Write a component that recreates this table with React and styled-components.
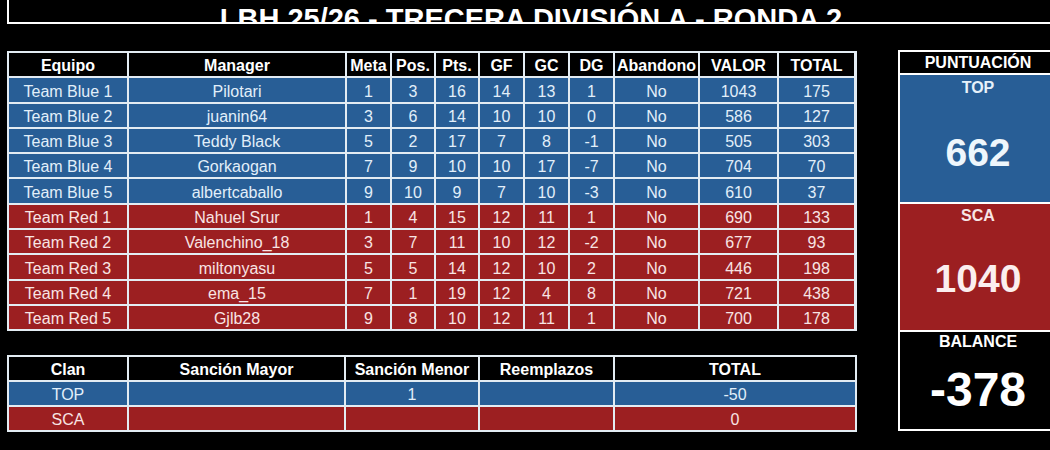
import React from "react";
import styled, { createGlobalStyle } from "styled-components";

const GlobalStyle = createGlobalStyle`
  html, body {
    margin: 0;
    padding: 0;
    background: #000;
    overflow: hidden;
  }
  body {
    font-family: "Liberation Sans", Arial, sans-serif;
    color: #fff;
  }
`;

const Page = styled.div`
  padding-left: 7px;
  width: 1100px;
`;

const TitleBar = styled.div`
  box-sizing: border-box;
  width: 1046px;
  height: 24px;
  padding-top: 5px;
  border-left: 2px solid #fff;
  border-bottom: 2px solid #fff;
  overflow: hidden;
  text-align: center;
`;

const Title = styled.h1`
  margin: 0;
  font-size: 29px;
  line-height: 29px;
  font-weight: 700;
  color: #fff;
  white-space: nowrap;
`;

const Body = styled.div`
  display: flex;
  align-items: flex-start;
  gap: 41px;
  margin-top: 26px;
`;

const LeftCol = styled.div`
  display: flex;
  flex-direction: column;
  gap: 24px;
  padding-top: 1px;
`;

const Grid = styled.div`
  display: grid;
  grid-template-columns: ${(p) => p.$cols};
  grid-auto-rows: ${(p) => p.$rowH};
  gap: 2px;
  padding: 2px;
  background: #e3ecf3;
`;

const tones = {
  head: { bg: "#000", fg: "#fff" },
  blue: { bg: "#285e96", fg: "#e2effa" },
  red: { bg: "#9c1f21", fg: "#f8e4e4" },
};

const Cell = styled.div`
  display: flex;
  align-items: flex-end;
  justify-content: center;
  background: ${(p) => tones[p.$tone].bg};
  color: ${(p) => tones[p.$tone].fg};
  font-size: 16px;
  line-height: 18px;
  padding-bottom: 1px;
  font-weight: ${(p) => (p.$tone === "head" ? 700 : 400)};
  white-space: nowrap;
  overflow: hidden;
`;

const ScorePanel = styled.div`
  display: grid;
  grid-template-rows: 21px 127px 126px 97px;
  gap: 2px;
  padding: 2px;
  width: 156px;
  background: #fff;
`;

const PanelSection = styled.div`
  display: flex;
  flex-direction: column;
  align-items: center;
  background: ${(p) => tones[p.$tone].bg};
  color: #fff;
`;

const PanelLabel = styled.div`
  font-size: 16px;
  font-weight: 700;
  line-height: 18px;
  padding-top: ${(p) => p.$top || 0}px;
  color: ${(p) => (p.$tone === "red" ? "#f7e6e6" : p.$tone === "blue" ? "#e6f1fa" : "#fff")};
`;

const BigNumber = styled.div`
  flex: 1;
  display: flex;
  align-items: center;
  padding-top: ${(p) => p.$top || 0}px;
  font-size: ${(p) => p.$size}px;
  font-weight: 700;
  line-height: 1;
  color: ${(p) => (p.$tone === "red" ? "#fbeeee" : p.$tone === "blue" ? "#eef6fc" : "#fff")};
`;

const mainCols = "118px 216px 43px 42px 42px 43px 43px 43px 83px 77px 75px";
const mainHead = ["Equipo", "Manager", "Meta", "Pos.", "Pts.", "GF", "GC", "DG", "Abandono", "VALOR", "TOTAL"];

const teams = [
  ["Team Blue 1", "Pilotari", 1, 3, 16, 14, 13, 1, "No", 1043, 175],
  ["Team Blue 2", "juanin64", 3, 6, 14, 10, 10, 0, "No", 586, 127],
  ["Team Blue 3", "Teddy Black", 5, 2, 17, 7, 8, -1, "No", 505, 303],
  ["Team Blue 4", "Gorkaogan", 7, 9, 10, 10, 17, -7, "No", 704, 70],
  ["Team Blue 5", "albertcaballo", 9, 10, 9, 7, 10, -3, "No", 610, 37],
  ["Team Red 1", "Nahuel Srur", 1, 4, 15, 12, 11, 1, "No", 690, 133],
  ["Team Red 2", "Valenchino_18", 3, 7, 11, 10, 12, -2, "No", 677, 93],
  ["Team Red 3", "miltonyasu", 5, 5, 14, 12, 10, 2, "No", 446, 198],
  ["Team Red 4", "ema_15", 7, 1, 19, 12, 4, 8, "No", 721, 438],
  ["Team Red 5", "Gjlb28", 9, 8, 10, 12, 11, 1, "No", 700, 178],
];

const clanCols = "118px 215px 132px 133px 240px";
const clanHead = ["Clan", "Sanción Mayor", "Sanción Menor", "Reemplazos", "TOTAL"];
const clans = [
  ["TOP", "", 1, "", -50],
  ["SCA", "", "", "", 0],
];

export default function App() {
  return (
    <Page>
      <GlobalStyle />
      <TitleBar>
        <Title>LBH 25/26 - TRECERA DIVISIÓN A - RONDA 2</Title>
      </TitleBar>
      <Body>
        <LeftCol>
          <Grid $cols={mainCols} $rowH="23.3px">
            {mainHead.map((h) => (
              <Cell key={h} $tone="head">{h}</Cell>
            ))}
            {teams.map((row, i) =>
              row.map((v, j) => (
                <Cell key={`${i}-${j}`} $tone={i < 5 ? "blue" : "red"}>
                  {v}
                </Cell>
              ))
            )}
          </Grid>
          <Grid $cols={clanCols} $rowH="23px">
            {clanHead.map((h) => (
              <Cell key={h} $tone="head">{h}</Cell>
            ))}
            {clans.map((row, i) =>
              row.map((v, j) => (
                <Cell key={`c${i}-${j}`} $tone={i === 0 ? "blue" : "red"}>
                  {v}
                </Cell>
              ))
            )}
          </Grid>
        </LeftCol>
        <ScorePanel>
          <PanelSection $tone="head">
            <PanelLabel $top={2}>PUNTUACIÓN</PanelLabel>
          </PanelSection>
          <PanelSection $tone="blue">
            <PanelLabel $tone="blue" $top={4}>TOP</PanelLabel>
            <BigNumber $tone="blue" $size={39} $top={6}>662</BigNumber>
          </PanelSection>
          <PanelSection $tone="red">
            <PanelLabel $tone="red" $top={3}>SCA</PanelLabel>
            <BigNumber $tone="red" $size={39} $top={2}>1040</BigNumber>
          </PanelSection>
          <PanelSection $tone="head">
            <PanelLabel $top={1}>BALANCE</PanelLabel>
            <BigNumber $size={48}>-378</BigNumber>
          </PanelSection>
        </ScorePanel>
      </Body>
    </Page>
  );
}
